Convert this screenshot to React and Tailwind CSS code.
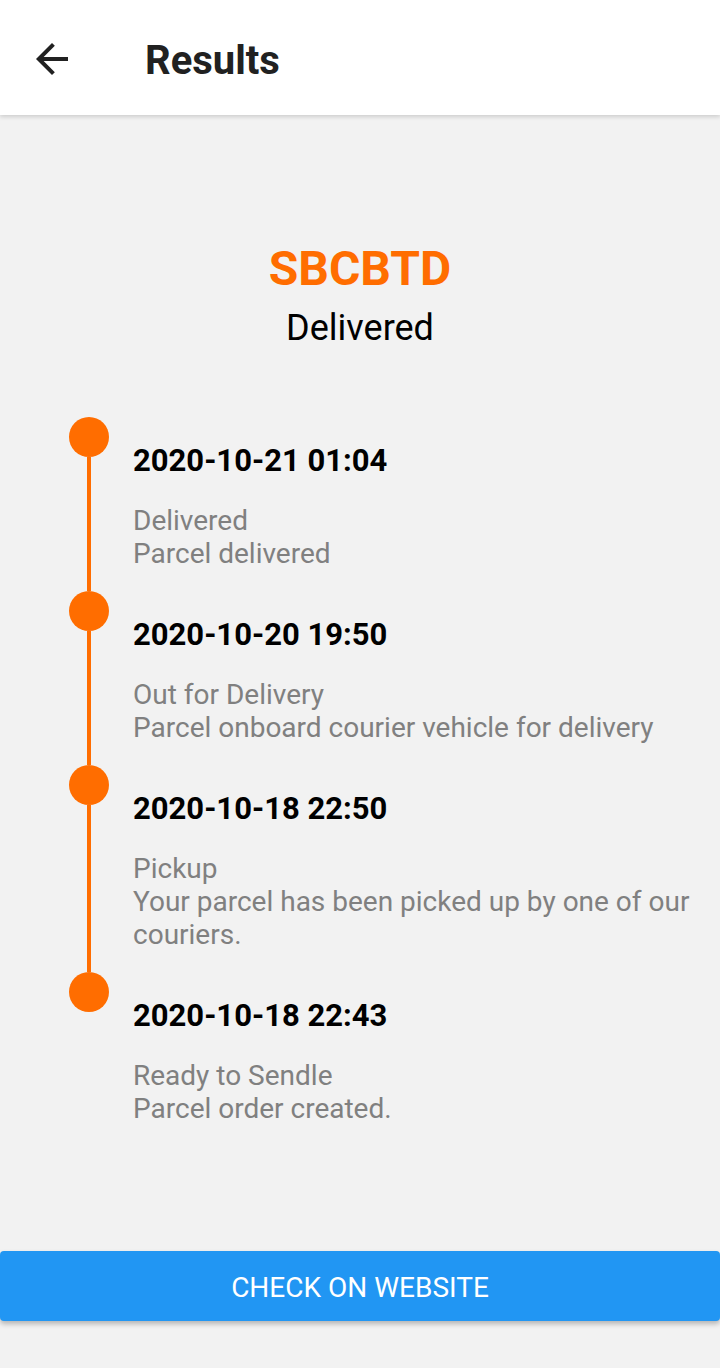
import React from "react";

const events = [
  { date: "2020-10-21 01:04", lines: ["Delivered", "Parcel delivered"] },
  { date: "2020-10-20 19:50", lines: ["Out for Delivery", "Parcel onboard courier vehicle for delivery"] },
  { date: "2020-10-18 22:50", lines: ["Pickup", "Your parcel has been picked up by one of our couriers."] },
  { date: "2020-10-18 22:43", lines: ["Ready to Sendle", "Parcel order created."] },
];

function BackArrow() {
  return (
    <svg width="48" height="48" viewBox="0 0 24 24" fill="#212121">
      <path d="M20 11H7.83l5.59-5.59L12 4l-8 8 8 8 1.41-1.41L7.83 13H20v-2z" />
    </svg>
  );
}

export default function App() {
  return (
    <div
      className="min-h-[1368px] w-[720px] bg-[#f2f2f2] flex flex-col"
      style={{ fontFamily: "Roboto, 'Noto Sans', sans-serif" }}
    >
      <header className="h-[115px] bg-white flex items-center shadow-[0_2px_4px_rgba(0,0,0,0.15)] relative z-10">
        <div className="ml-[28px] mt-[2px]">
          <BackArrow />
        </div>
        <h1 className="ml-[69px] mt-[6px] text-[40px] leading-[48px] font-bold text-[#212121]">Results</h1>
      </header>

      <main className="flex-1 flex flex-col">
        <div className="mt-[126px] flex flex-col items-center">
          <div className="text-[48px] leading-[56px] font-bold text-[#ff6d00]">SBCBTD</div>
          <div className="mt-[10px] text-[36px] leading-[42px] text-black">Delivered</div>
        </div>

        <div className="mt-[68px] pl-[69px] pr-[16px] flex flex-col">
          {events.map((e, i) => (
            <div key={i} className="flex">
              <div className="w-[40px] flex flex-col items-center shrink-0">
                <div className="w-[40px] h-[40px] rounded-full bg-[#ff6d00]" />
                {i < events.length - 1 && <div className="w-[4px] flex-1 bg-[#ff6d00]" />}
              </div>
              <div className="ml-[24px] pt-[25px] pb-[21px]">
                <div className="text-[31px] leading-[38px] font-bold text-black">{e.date}</div>
                <div className="mt-[24px] text-[28px] leading-[33px] text-[#808080]">
                  {e.lines.map((l, j) => (
                    <div key={j}>{l}</div>
                  ))}
                </div>
              </div>
            </div>
          ))}
        </div>

        <div className="flex-1" />

        <button className="mb-[47px] h-[70px] w-full rounded-[4px] bg-[#2196f3] text-white text-[28px] pt-[3px] flex items-center justify-center shadow-[0_3px_5px_rgba(0,0,0,0.25)]">
          CHECK ON WEBSITE
        </button>
      </main>
    </div>
  );
}
